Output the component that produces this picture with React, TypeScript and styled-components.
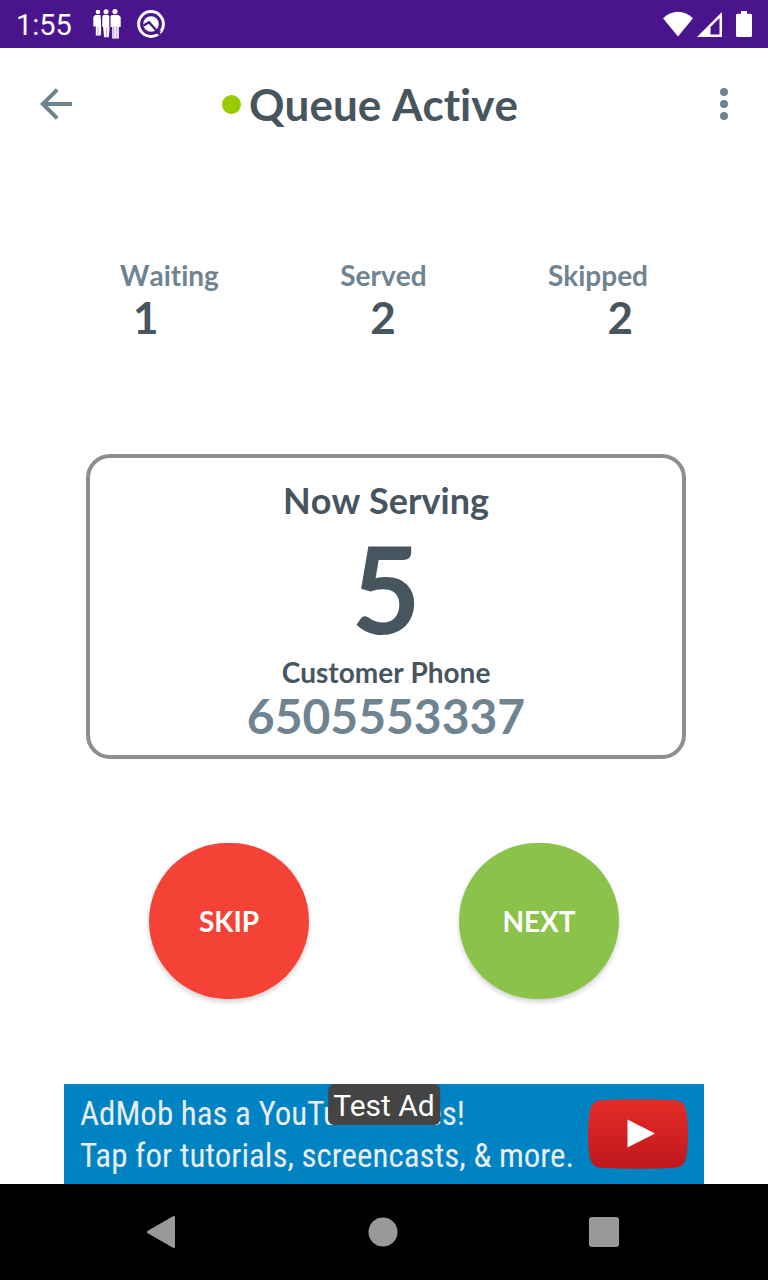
import React from "react";
import styled, { createGlobalStyle } from "styled-components";

const ink = "#47555f";
const slate = "#708390";

const GlobalStyle = createGlobalStyle`
  *, *::before, *::after { box-sizing: border-box; }
  body { margin: 0; background: #fff; font-family: Lato, sans-serif; font-variant-ligatures: none; font-kerning: none; color: ${ink}; }
  h1, h2, p { margin: 0; }
  button { border: 0; padding: 0; background: none; font: inherit; font-kerning: none; cursor: pointer; }
  svg { display: block; }
`;

const Screen = styled.div`
  display: flex;
  flex-direction: column;
  min-height: 100vh;
`;

const StatusBar = styled.div`
  display: flex;
  justify-content: space-between;
  align-items: center;
  height: 48px;
  padding: 0 16px;
  background: #4a148c;
  color: #fff;
`;

const StatusGroup = styled.div<{ $gap: number }>`
  display: flex;
  align-items: center;
  gap: ${(p) => p.$gap}px;
`;

const Clock = styled.time`
  margin-right: 5px;
  padding-top: 2px;
  font: 400 29px/48px Roboto, sans-serif;
`;

const BatterySlot = styled.span`
  padding-left: 10px;
`;

const Header = styled.header`
  display: grid;
  grid-template-columns: 48px 1fr 48px;
  align-items: center;
  height: 112px;
  padding: 0 20px 0 32px;
`;

const IconButton = styled.button`
  display: grid;
  place-items: center;
  width: 48px;
  height: 48px;
`;

const Title = styled.h1`
  display: flex;
  justify-content: center;
  align-items: center;
  gap: 8px;
  padding: 0 40px 0 0;
  font-size: 44px;
  line-height: 50px;
  font-weight: 700;
`;

const ActiveDot = styled.span`
  width: 19px;
  height: 19px;
  border-radius: 50%;
  background: #99cc00;
`;

const Main = styled.main`
  flex: 1;
  display: flex;
  flex-direction: column;
`;

const Stats = styled.section`
  padding: 97px 120px 0;
`;

const StatRow = styled.div`
  display: flex;
  justify-content: space-between;
`;

const StatLabels = styled(StatRow)`
  font-size: 28px;
  line-height: 36px;
  font-weight: 700;
  color: ${slate};
`;

const StatValues = styled(StatRow)`
  padding: 0 15px 0 13px;
  font-size: 44px;
  line-height: 48px;
  font-weight: 700;
`;

const Card = styled.section`
  display: flex;
  flex-direction: column;
  align-items: center;
  margin: 113px 82px 0 86px;
  padding: 20px 16px 13px;
  border: 4px solid #8e8e8e;
  border-radius: 24px;
  text-align: center;
`;

const CardTitle = styled.h2`
  font-size: 36px;
  line-height: 44px;
  font-weight: 700;
`;

const Ticket = styled.p`
  font-size: 120px;
  line-height: 132px;
  font-weight: 700;
`;

const PhoneLabel = styled.p`
  font-size: 28px;
  line-height: 36px;
  font-weight: 700;
`;

const Phone = styled.p`
  font-size: 48px;
  line-height: 52px;
  font-weight: 700;
  color: ${slate};
`;

const Actions = styled.div`
  display: flex;
  justify-content: space-between;
  padding: 84px 149px;
`;

const ActionButton = styled.button<{ $color: string }>`
  width: 160px;
  height: 156px;
  border-radius: 78px;
  background: ${(p) => p.$color};
  box-shadow: 0 3px 5px rgba(0, 0, 0, 0.18);
  color: #fff;
  font-size: 28px;
  line-height: 36px;
  font-weight: 700;
`;

const Ad = styled.a`
  position: relative;
  display: flex;
  justify-content: space-between;
  align-items: center;
  height: 100px;
  margin: auto 64px 0;
  padding: 0 16px;
  background: #0083c3;
  color: #e8eef2;
  font: 400 33px/42px "Roboto Condensed", Roboto, sans-serif;
  text-decoration: none;
  white-space: nowrap;
`;

const AdCopy = styled.span`
  padding-top: 2px;
`;

const AdBadge = styled.span`
  position: absolute;
  top: 0;
  left: 50%;
  transform: translateX(-50%);
  padding: 3px 5px 1px;
  border-radius: 6px;
  background: #444;
  color: #fff;
  font: 400 30px/37px Roboto, sans-serif;
`;

const NavBar = styled.nav`
  display: flex;
  justify-content: space-between;
  align-items: center;
  height: 96px;
  padding: 0 140px 0 137px;
  background: #000;
`;

const QueueIcon = () => (
  <svg width="28" height="30" viewBox="0 0 28 30" fill="#fff">
    <circle cx="5" cy="3" r="2.3" />
    <path d="M2 6h5.500l.8 11-.5 9.500H2.800v-9H.3V8z" />
    <circle cx="13" cy="2.8" r="2.500" />
    <path d="M10.300 6h5l1.200 2v10l-.7 10.300h-4.700l-1-10.300-1-.5V8z" />
    <circle cx="22" cy="2.600" r="2.600" />
    <path d="M18.500 6h7l2.200 2v10h-1.900v11.500h-6.600V18h-1.900V8z" />
    <path d="M8.700 7.500v18M16.900 8v10" stroke="#4a148c" strokeWidth=".8" />
    <path d="M4.500 17.500h1v9h-1zM13 18.500h.9v9.500H13zM20.200 17.500h1.300v11.500h-1.300zM22.900 17.500h1.400v11.500h-1.400z" fill="#c3aedb" />
  </svg>
);

const QIcon = () => (
  <svg width="28" height="28" viewBox="0 0 28 28">
    <circle cx="14" cy="14" r="12.4" fill="none" stroke="#fff" strokeWidth="3" />
    <circle cx="14" cy="14" r="7.8" fill="#fff" />
    <path d="M6.500 15.500 12 12.300 23 24.500" fill="none" stroke="#4a148c" strokeWidth="2.4" />
    <path d="M19 23.500 23.500 21" fill="none" stroke="#4a148c" strokeWidth="1.500" />
  </svg>
);

const WifiIcon = () => (
  <svg width="30" height="26" viewBox="0 0 30 26">
    <path d="M0 7.2C8.5-1.5 21.5-1.5 30 7.2L15 25.5z" fill="#fff" />
  </svg>
);

const SignalIcon = () => (
  <svg width="25" height="25" viewBox="0 0 25 25">
    <path fillRule="evenodd" d="M25 0v25H0zM22.5 6 13.5 15v7.5h9z" fill="#fff" />
  </svg>
);

const BatteryIcon = () => (
  <svg width="16" height="26" viewBox="0 0 16 26">
    <path d="M5 0h6v2.7h3.5q1.5 0 1.5 1.5V24.5q0 1.5-1.5 1.5h-13Q0 26 0 24.5V4.2q0-1.5 1.5-1.5H5z" fill="#fff" />
  </svg>
);

const BackArrow = () => (
  <svg width="32" height="32" viewBox="0 0 32 32" fill="none" stroke={slate} strokeWidth="4">
    <path d="M32 16H3M17.2 1.6 2.8 16l14.4 14.4" />
  </svg>
);

const MoreIcon = () => (
  <svg width="8" height="32" viewBox="0 0 8 32" fill={slate}>
    <circle cx="4" cy="4" r="4" />
    <circle cx="4" cy="16" r="4" />
    <circle cx="4" cy="28" r="4" />
  </svg>
);

const VideoIcon = () => (
  <svg width="100" height="70" viewBox="0 0 100 70">
    <defs>
      <linearGradient id="red" x1="0" y1="0" x2="0" y2="1">
        <stop offset="0" stopColor="#e52d27" />
        <stop offset="1" stopColor="#bf171d" />
      </linearGradient>
    </defs>
    <path d="M13 1.2Q50-.8 87 1.2C96 2 98 8 99 17q2 18 0 36c-1 9-3 15-12 15.8q-37 2-74 0C4 68 2 62 1 53q-2-18 0-36C2 8 4 2 13 1.2z" fill="url(#red)" />
    <path d="M39.5 20.5v28L67 34.5z" fill="#fff" />
  </svg>
);

export default function App() {
  return (
    <>
      <GlobalStyle />
      <Screen>
        <StatusBar>
          <StatusGroup $gap={16}>
            <Clock>1:55</Clock>
            <QueueIcon />
            <QIcon />
          </StatusGroup>
          <StatusGroup $gap={4}>
            <WifiIcon />
            <SignalIcon />
            <BatterySlot>
              <BatteryIcon />
            </BatterySlot>
          </StatusGroup>
        </StatusBar>
        <Header>
          <IconButton aria-label="Back"><BackArrow /></IconButton>
          <Title><ActiveDot />Queue Active</Title>
          <IconButton aria-label="More options"><MoreIcon /></IconButton>
        </Header>
        <Main>
          <Stats>
            <StatLabels>
              <span>Waiting</span><span>Served</span><span>Skipped</span>
            </StatLabels>
            <StatValues>
              <span>1</span><span>2</span><span>2</span>
            </StatValues>
          </Stats>
          <Card>
            <CardTitle>Now Serving</CardTitle>
            <Ticket>5</Ticket>
            <PhoneLabel>Customer Phone</PhoneLabel>
            <Phone>6505553337</Phone>
          </Card>
          <Actions>
            <ActionButton $color="#f44336">SKIP</ActionButton>
            <ActionButton $color="#8bc34a">NEXT</ActionButton>
          </Actions>
          <Ad href="#">
            <AdCopy>
              AdMob has a YouTube series!<br />
              Tap for tutorials, screencasts, &amp; more.
            </AdCopy>
            <VideoIcon />
            <AdBadge>Test Ad</AdBadge>
          </Ad>
        </Main>
        <NavBar>
          <IconButton aria-label="Navigate back">
            <svg width="28" height="32" viewBox="0 0 28 32" fill="#999">
              <path d="M26 .3q2-1 2 1v29.4q0 2-2 1L.8 17.3q-1.6-1.3 0-2.6z" />
            </svg>
          </IconButton>
          <IconButton aria-label="Home">
            <svg width="30" height="30" viewBox="0 0 30 30" fill="#999"><circle cx="15" cy="15" r="14.5" /></svg>
          </IconButton>
          <IconButton aria-label="Recent apps">
            <svg width="30" height="30" viewBox="0 0 30 30" fill="#999"><rect width="30" height="30" rx="3" /></svg>
          </IconButton>
        </NavBar>
      </Screen>
    </>
  );
}
